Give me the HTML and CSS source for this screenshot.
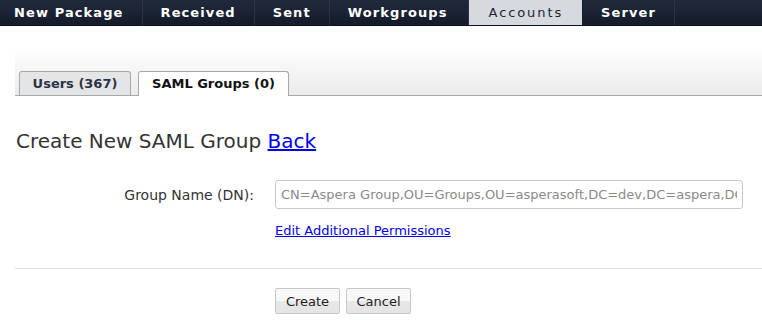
FILE: index.html
```html
<!DOCTYPE html>
<html>
<head>
	<title>Accounts - SAML Groups</title>
	<link rel="stylesheet" href="styles.css">
	<meta charset="utf-8">
</head>
<body>
	<div class="topnav">
		<a class="topnav__item topnav__item--first">New Package</a>
		<a class="topnav__item">Received</a>
		<a class="topnav__item">Sent</a>
		<a class="topnav__item topnav__item--wide">Workgroups</a>
		<a class="topnav__item topnav__item--active">Accounts</a>
		<a class="topnav__item">Server</a>
	</div>

	<div class="tabbar">
		<a class="tab tab--users">Users (367)</a>
		<a class="tab tab--current">SAML Groups (0)</a>
	</div>

	<div class="content">
		<h1 class="heading">Create New SAML Group <a href="#" class="heading__back">Back</a></h1>

		<div class="form__row">
			<label class="form__label">Group Name (DN):</label>
			<input class="form__input" type="text" placeholder="CN=Aspera Group,OU=Groups,OU=asperasoft,DC=dev,DC=aspera,DC=us">
		</div>
		<div class="form__row form__row--link">
			<span></span>
			<a href="#" class="form__link">Edit Additional Permissions</a>
		</div>
	</div>

	<div class="divider"></div>

	<div class="buttons">
		<button class="btn">Create</button>
		<button class="btn">Cancel</button>
	</div>
</body>
</html>
```

FILE: styles.css
```css
html, * {
	box-sizing: border-box;
}

body {
	margin: 0;
	font-family: "DejaVu Sans", Verdana, sans-serif;
	color: #333;
	background: #fff;
}

.topnav {
	display: flex;
	height: 26px;
	background: linear-gradient(#212a3c, #141b2a);
	border-bottom: 1px solid #0d121d;
}

.topnav__item {
	display: block;
	padding: 0 18px;
	line-height: 25px;
	font-size: 13px;
	font-weight: bold;
	letter-spacing: 1.1px;
	color: #fff;
	border-right: 1px solid #2b3446;
}

.topnav__item--first {
	padding-left: 14px;
}

.topnav__item--wide {
	padding-right: 20px;
}

.topnav__item--active {
	padding: 0 19px 0 20px;
	background: #d6dadf;
	color: #1c2333;
	font-weight: normal;
	letter-spacing: 1.9px;
	border-right-color: #141b2a;
}

.tabbar {
	display: flex;
	align-items: flex-end;
	height: 70px;
	margin-left: 15px;
	padding-left: 4px;
	background: linear-gradient(#fff 30%, #ebebeb);
	border-bottom: 1px solid #a8a8a8;
}

.tab {
	display: block;
	height: 24px;
	line-height: 24px;
	font-size: 13px;
	font-weight: bold;
	text-align: center;
	border: 1px solid #a8a8a8;
	border-bottom: none;
	border-radius: 3px 3px 0 0;
}

.tab--users {
	width: 112px;
	background: #e4e5e7;
	color: #2c3344;
}

.tab--current {
	width: 151px;
	height: 25px;
	margin-left: 7px;
	margin-bottom: -1px;
	background: #fff;
	color: #111;
}

.content {
	padding: 0 19px 0 16px;
}

.heading {
	margin: 32px 0 0;
	font-size: 20px;
	font-weight: normal;
	line-height: 26px;
	color: #333;
}

.heading__back {
	color: #0000ee;
}

.form__row {
	display: grid;
	grid-template-columns: 238px 1fr;
	column-gap: 21px;
	align-items: center;
	margin-top: 26px;
}

.form__row--link {
	margin-top: 14px;
}

.form__label {
	text-align: right;
	font-size: 14px;
	color: #333;
}

.form__input {
	width: 468px;
	height: 29px;
	padding: 0 5px;
	font-family: "DejaVu Sans", Verdana, sans-serif;
	font-size: 13px;
	color: #333;
	border: 1px solid #c8c8c8;
	border-radius: 3px;
}

.form__input::placeholder {
	color: #8a8a8a;
}

.form__link {
	font-size: 13px;
	color: #0000ee;
}

.divider {
	height: 1px;
	margin: 30px 0 0 15px;
	background: #dedede;
}

.buttons {
	display: flex;
	gap: 6px;
	padding: 19px 0 0 275px;
}

.btn {
	width: 65px;
	height: 26px;
	font-family: "DejaVu Sans", Verdana, sans-serif;
	font-size: 13px;
	color: #222;
	background: linear-gradient(#f8f8f8 50%, #e8e8e8 50%, #e4e4e4);
	border: 1px solid #c8c8c8;
	border-radius: 2px;
}
```
